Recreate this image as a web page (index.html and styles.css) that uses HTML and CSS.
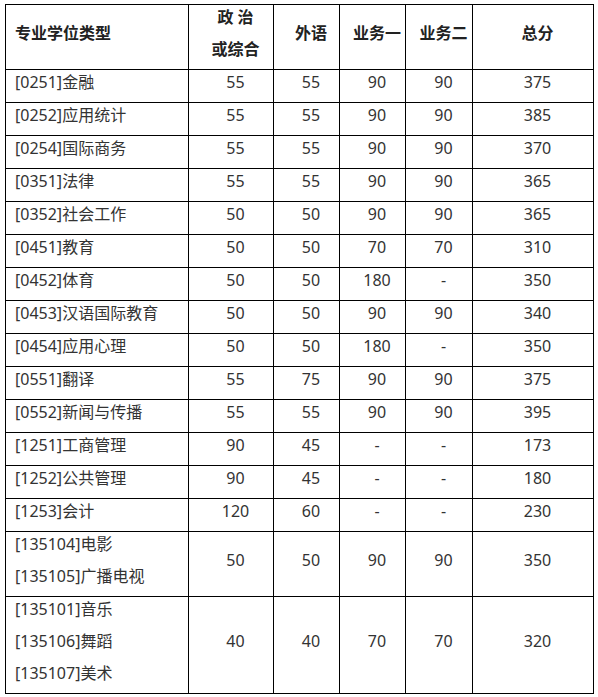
FILE: index.html
```html
<!DOCTYPE html>
<html lang="zh-CN">
<head>
<meta charset="utf-8">
<link rel="stylesheet" href="styles.css">
</head>
<body>
<table class="score">
  <colgroup>
    <col class="c-name"><col class="c-pol"><col class="c-lang"><col class="c-b1"><col class="c-b2"><col class="c-total">
  </colgroup>
  <thead>
    <tr>
      <th class="left"><p>专业学位类型</p></th>
      <th><p>政 治</p><p>或综合</p></th>
      <th><p>外语</p></th>
      <th><p>业务一</p></th>
      <th><p>业务二</p></th>
      <th><p>总分</p></th>
    </tr>
  </thead>
  <tbody>
    <tr><td class="left"><p>[0251]金融</p></td><td><p>55</p></td><td><p>55</p></td><td><p>90</p></td><td><p>90</p></td><td><p>375</p></td></tr>
    <tr><td class="left"><p>[0252]应用统计</p></td><td><p>55</p></td><td><p>55</p></td><td><p>90</p></td><td><p>90</p></td><td><p>385</p></td></tr>
    <tr><td class="left"><p>[0254]国际商务</p></td><td><p>55</p></td><td><p>55</p></td><td><p>90</p></td><td><p>90</p></td><td><p>370</p></td></tr>
    <tr><td class="left"><p>[0351]法律</p></td><td><p>55</p></td><td><p>55</p></td><td><p>90</p></td><td><p>90</p></td><td><p>365</p></td></tr>
    <tr><td class="left"><p>[0352]社会工作</p></td><td><p>50</p></td><td><p>50</p></td><td><p>90</p></td><td><p>90</p></td><td><p>365</p></td></tr>
    <tr><td class="left"><p>[0451]教育</p></td><td><p>50</p></td><td><p>50</p></td><td><p>70</p></td><td><p>70</p></td><td><p>310</p></td></tr>
    <tr><td class="left"><p>[0452]体育</p></td><td><p>50</p></td><td><p>50</p></td><td><p>180</p></td><td><p>-</p></td><td><p>350</p></td></tr>
    <tr><td class="left"><p>[0453]汉语国际教育</p></td><td><p>50</p></td><td><p>50</p></td><td><p>90</p></td><td><p>90</p></td><td><p>340</p></td></tr>
    <tr><td class="left"><p>[0454]应用心理</p></td><td><p>50</p></td><td><p>50</p></td><td><p>180</p></td><td><p>-</p></td><td><p>350</p></td></tr>
    <tr><td class="left"><p>[0551]翻译</p></td><td><p>55</p></td><td><p>75</p></td><td><p>90</p></td><td><p>90</p></td><td><p>375</p></td></tr>
    <tr><td class="left"><p>[0552]新闻与传播</p></td><td><p>55</p></td><td><p>55</p></td><td><p>90</p></td><td><p>90</p></td><td><p>395</p></td></tr>
    <tr><td class="left"><p>[1251]工商管理</p></td><td><p>90</p></td><td><p>45</p></td><td><p>-</p></td><td><p>-</p></td><td><p>173</p></td></tr>
    <tr><td class="left"><p>[1252]公共管理</p></td><td><p>90</p></td><td><p>45</p></td><td><p>-</p></td><td><p>-</p></td><td><p>180</p></td></tr>
    <tr><td class="left"><p>[1253]会计</p></td><td><p>120</p></td><td><p>60</p></td><td><p>-</p></td><td><p>-</p></td><td><p>230</p></td></tr>
    <tr><td class="left"><p>[135104]电影</p><p>[135105]广播电视</p></td><td><p>50</p></td><td><p>50</p></td><td><p>90</p></td><td><p>90</p></td><td><p>350</p></td></tr>
    <tr><td class="left"><p>[135101]音乐</p><p>[135106]舞蹈</p><p>[135107]美术</p></td><td><p>40</p></td><td><p>40</p></td><td><p>70</p></td><td><p>70</p></td><td><p>320</p></td></tr>
  </tbody>
</table>
</body>
</html>
```
FILE: styles.css
```css
html, body {
  background: #fff;
}
body {
  margin: 4px 0 0 5px;
  font-family: "Noto Sans", "Noto Sans CJK SC", sans-serif;
  font-size: 16px;
  color: #333;
}
.score {
  border-collapse: collapse;
  table-layout: fixed;
  width: 588px;
}
.c-name { width: 183px; }
.c-pol { width: 85px; }
.c-lang { width: 66px; }
.c-b1 { width: 66px; }
.c-b2 { width: 67px; }
.c-total { width: 121px; }
.score th,
.score td {
  border: 1px solid #000;
  padding: 0 0 0 9px;
  text-align: center;
  vertical-align: middle;
  white-space: nowrap;
}
.score th {
  font-weight: bold;
  color: #222;
}
.score .left {
  text-align: left;
}
.score p {
  margin: 0;
  line-height: 24px;
  padding-bottom: 8px;
}
```
